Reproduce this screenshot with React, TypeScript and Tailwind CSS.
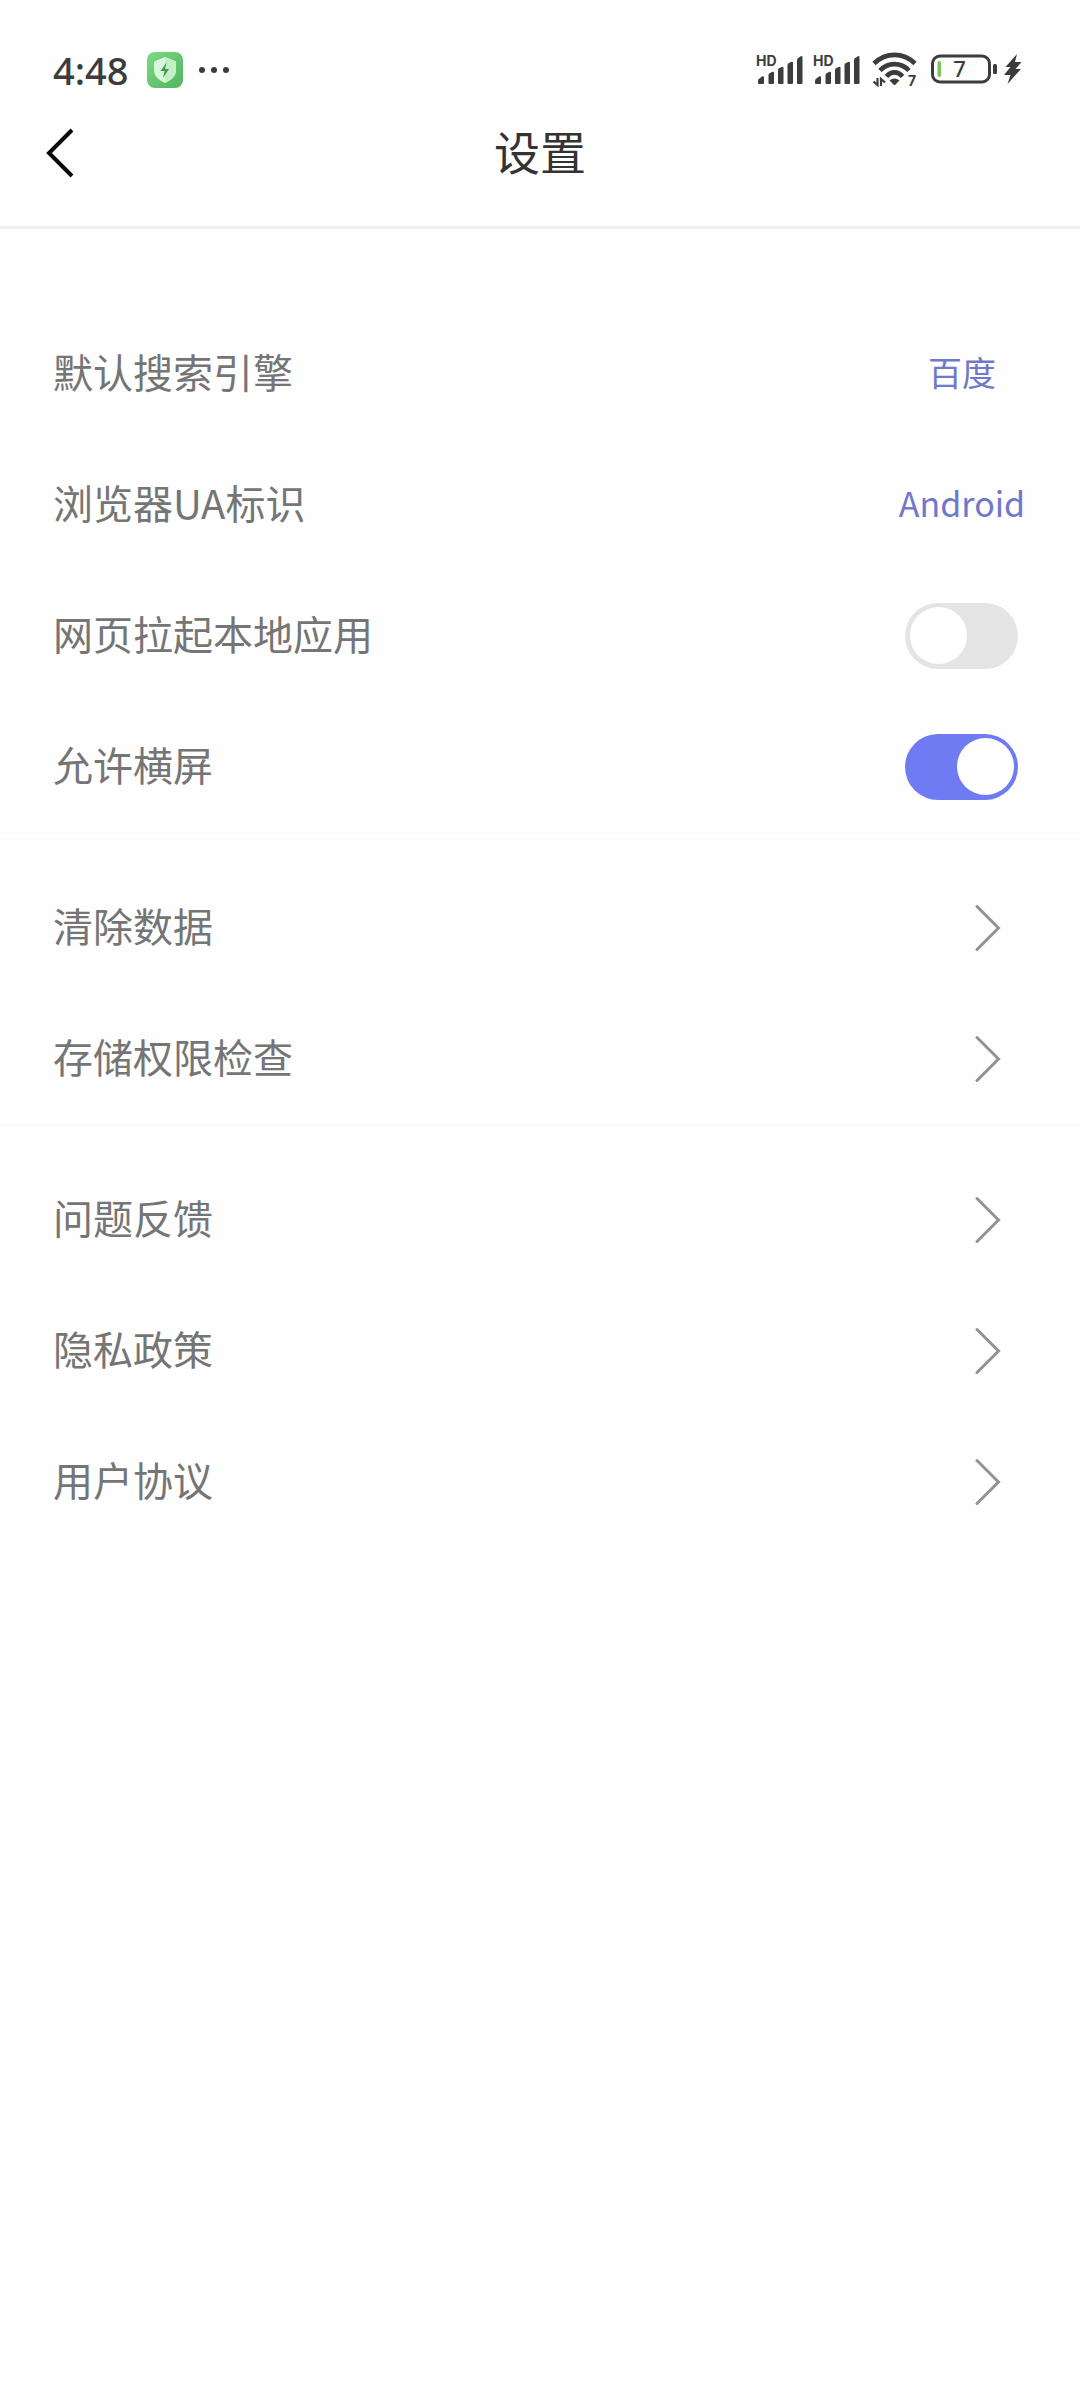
import { useState } from "react";

function Signal() {
  return (
    <svg viewBox="0 0 48 34" className="h-[34px] w-12" aria-label="HD 信号">
      <text x="0" y="13" fontSize="14" fontWeight="700" fontFamily="Inter, sans-serif" fill="#3c3c3c">
        HD
      </text>
      <g fill="#3c3c3c">
        <path d="M2 28q0-2 2-3l2-1.500q2-1 2 1V30q0 1-1 1H3q-1 0-1-1z" />
        <path d="M12.500 22q0-1.500 1.500-2l2-1q2-1 2 1V30q0 1-1 1h-3.500q-1 0-1-1z" />
        <path d="M22 17q0-1.500 1.500-2l2-1q2-1 2 1V30q0 1-1 1h-3.500q-1 0-1-1z" />
        <path d="M31.500 12q0-1.500 1.500-2l2-1q2-1 2 1V30q0 1-1 1h-3.500q-1 0-1-1z" />
        <path d="M41 7q0-1.500 1.500-2.300l2-1.300q2-1 2 1V30q0 1-1 1H42q-1 0-1-1z" />
      </g>
    </svg>
  );
}

function Wifi() {
  return (
    <svg viewBox="0 0 46 36" className="h-9 w-[46px]" aria-label="Wi-Fi">
      <g fill="none" stroke="#3c3c3c" strokeWidth="4.600">
        <path d="M2 11.500C14 0 31 0 43 11.500" />
        <path d="M8 18.500C16 10 29 10 37 18.500" />
        <path d="M14.500 24.500C19 19 26 19 30.500 24.500" />
      </g>
      <path d="M17.500 28.500q5-4 10 0l-4 4q-1 1-2 0z" fill="#3c3c3c" />
      <path d="M5.500 26v7L1.500 29.500M9 34v-7l4 3.500" fill="none" stroke="#3c3c3c" strokeWidth="2.200" />
      <text x="36" y="34" fontSize="14" fontWeight="700" fontFamily="Inter, sans-serif" fill="#3c3c3c">
        7
      </text>
    </svg>
  );
}

function Battery() {
  return (
    <svg viewBox="0 0 68 34" className="h-[34px] w-[68px]" aria-label="电量 7%">
      <rect x="2.500" y="3" width="57" height="26" rx="7.500" fill="none" stroke="#3c3c3c" strokeWidth="3" />
      <rect x="63" y="11" width="4" height="10" rx="1.500" fill="#3c3c3c" />
      <rect x="7.500" y="8" width="3.500" height="16" rx="1.700" fill="#7cc45c" />
      <text x="29.500" y="24" textAnchor="middle" fontSize="22" fontWeight="500" fontFamily="Noto Sans, sans-serif" fill="#3c3c3c">
        7
      </text>
    </svg>
  );
}

function Bolt() {
  return (
    <svg viewBox="0 0 18 34" className="h-[34px] w-[18px]" aria-label="充电中">
      <path d="M13 1L1.500 14h5L0 22h6.500L3.500 31 17 16h-5.500L17.500 9h-6.500z" fill="#3c3c3c" />
    </svg>
  );
}

function ShieldBadge() {
  return (
    <svg viewBox="0 0 36 36" className="size-9" aria-hidden="true">
      <defs>
        <linearGradient id="badge" x1="0" y1="0" x2="1" y2="1">
          <stop offset="0" stopColor="#7ddb82" />
          <stop offset="1" stopColor="#52b260" />
        </linearGradient>
      </defs>
      <rect width="36" height="36" rx="8" fill="url(#badge)" />
      <path d="M18 5l11 4.500v8.500c0 6-4.500 10-11 13C11.500 28 7 24 7 18V9.500z" fill="#d9f8da" />
      <path d="M18 5l11 4.500v8.500c0 6-4.500 10-11 13z" fill="#c2efc5" />
      <path d="M19.500 10.500l-6 8.500h4l-1.500 7 6-9h-4z" fill="#3f9a52" />
    </svg>
  );
}

function StatusBar() {
  return (
    <div className="flex h-[100px] items-center justify-between pt-10 pr-[58px] pl-[53px]">
      <div className="flex items-center">
        <span className="font-['Noto_Sans',sans-serif] text-[38px] leading-9 font-medium text-[#3c3c3c]">4:48</span>
        <span className="ml-[18px]">
          <ShieldBadge />
        </span>
        <span className="ml-4 flex gap-[6px]">
          <i className="size-[6px] rounded-full bg-[#3c3c3c]" />
          <i className="size-[6px] rounded-full bg-[#3c3c3c]" />
          <i className="size-[6px] rounded-full bg-[#3c3c3c]" />
        </span>
      </div>
      <div className="flex items-center">
        <span className="mr-[9px]">
          <Signal />
        </span>
        <span className="mr-[11px]">
          <Signal />
        </span>
        <span className="mr-3">
          <Wifi />
        </span>
        <span className="mr-[6px]">
          <Battery />
        </span>
        <Bolt />
      </div>
    </div>
  );
}

const rowClass = "flex h-[131px] w-full items-center justify-between pl-[53px] text-left";
const labelClass = "pb-[6px]";

function ValueRow({ label, value }: { label: string; value: string }) {
  return (
    <button type="button" className={rowClass}>
      <span className={labelClass}>{label}</span>
      <span className="min-w-[236px] pb-1 text-center text-[34px] text-[#6f78cc]">{value}</span>
    </button>
  );
}

function ToggleRow({ label, initial }: { label: string; initial: boolean }) {
  const [on, setOn] = useState(initial);
  return (
    <label className={rowClass}>
      <span className={labelClass}>{label}</span>
      <span className="flex w-[237px] justify-center">
        <input
          type="checkbox"
          role="switch"
          checked={on}
          onChange={() => setOn(!on)}
          className="flex h-[66px] w-[113px] appearance-none items-center rounded-full bg-[#e4e4e4] px-[5px] before:size-[57px] before:rounded-full before:bg-white before:content-[''] checked:justify-end checked:bg-[#6f7bf3] checked:px-1"
        />
      </span>
    </label>
  );
}

function LinkRow({ label }: { label: string }) {
  return (
    <a href="#" className={rowClass}>
      <span className={labelClass}>{label}</span>
      <svg viewBox="0 0 26 48" className="mr-[79px] h-12 w-[26px]" aria-hidden="true">
        <path d="M2 2.500L23.500 24 2 45.500" fill="none" stroke="#929292" strokeWidth="3" strokeLinecap="round" />
      </svg>
    </a>
  );
}

export default function App() {
  return (
    <div className="min-h-screen bg-[#fefefe] font-['Noto_Sans_CJK_SC','Noto_Sans',sans-serif] text-[#757575]">
      <StatusBar />
      <header className="grid grid-cols-[1fr_auto_1fr] items-center border-b-[3px] border-[#f0f0f0] pb-[22px]">
        <button type="button" aria-label="返回" className="flex h-[104px] w-[120px] items-center pt-[2px] pl-[46px]">
          <svg viewBox="0 0 28 50" className="h-[50px] w-7" aria-hidden="true">
            <path d="M26 2L3 25l23 23" fill="none" stroke="#0a0a0a" strokeWidth="4" />
          </svg>
        </button>
        <h1 className="pb-1 text-[46px] leading-[100px] text-[#333]">设置</h1>
      </header>
      <main className="pt-[79px] text-[40px]">
        <section>
          <ValueRow label="默认搜索引擎" value="百度" />
          <ValueRow label="浏览器UA标识" value="Android" />
          <ToggleRow label="网页拉起本地应用" initial={false} />
          <ToggleRow label="允许横屏" initial={true} />
        </section>
        <section className="border-t-2 border-[#fbfbfb] pt-7">
          <LinkRow label="清除数据" />
          <LinkRow label="存储权限检查" />
        </section>
        <section className="border-t-2 border-[#fbfbfb] pt-7">
          <LinkRow label="问题反馈" />
          <LinkRow label="隐私政策" />
          <LinkRow label="用户协议" />
        </section>
      </main>
    </div>
  );
}
